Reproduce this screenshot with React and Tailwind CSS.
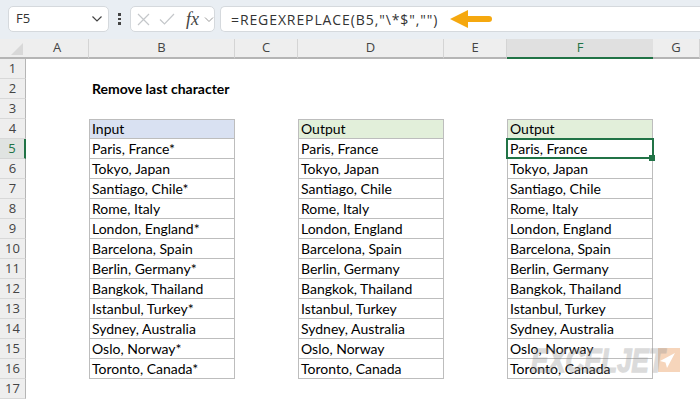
const columns = ["A", "B", "C", "D", "E", "F", "G"];

const inputs = [
  "Paris, France*",
  "Tokyo, Japan",
  "Santiago, Chile*",
  "Rome, Italy",
  "London, England*",
  "Barcelona, Spain",
  "Berlin, Germany*",
  "Bangkok, Thailand",
  "Istanbul, Turkey*",
  "Sydney, Australia",
  "Oslo, Norway*",
  "Toronto, Canada*",
];

const outputs = inputs.map((s) => s.replace("*", ""));

const cellFont = "font-['Lato','Liberation_Sans',sans-serif] text-[14px] text-black";

function Toolbar() {
  return (
    <div className="flex h-[39px] items-start bg-[#e9eef3] pt-[6px] pl-[8px]">
      <div className="flex h-[26px] w-[101px] items-center justify-between rounded-[5px] border border-[#d5d9dd] bg-white pl-[7px] pr-[5px]">
        <span className="font-['Open_Sans',sans-serif] text-[13px] text-[#333]">F5</span>
        <svg width="12" height="8" viewBox="0 0 12 8" fill="none" stroke="#444" strokeWidth="1.2">
          <path d="M1.5 1.5 6 6l4.5-4.5" />
        </svg>
      </div>
      <div className="flex h-[26px] w-[21px] flex-col items-center justify-center gap-[2px]">
        <span className="size-[2.5px] bg-[#444]" />
        <span className="size-[2.5px] bg-[#444]" />
        <span className="size-[2.5px] bg-[#444]" />
      </div>
      <div className="flex h-[26px] w-[85px] items-center rounded-[5px] border border-[#d5d9dd] bg-white pl-[6px]">
        <svg width="13" height="13" viewBox="0 0 13 13" stroke="#c4c7ca" strokeWidth="1.2" fill="none">
          <path d="M1 1l11 11M12 1 1 12" />
        </svg>
        <svg className="ml-[9px]" width="16" height="12" viewBox="0 0 16 12" stroke="#c4c7ca" strokeWidth="1.2" fill="none">
          <path d="M1 6.5 5.5 11 15 1" />
        </svg>
        <span className="ml-[11px] font-['Liberation_Serif',serif] text-[18px] italic leading-none text-[#444]">fx</span>
        <svg className="ml-[5px]" width="10" height="7" viewBox="0 0 10 7" fill="none" stroke="#999" strokeWidth="1">
          <path d="M1 1.5 5 5.5l4-4" />
        </svg>
      </div>
      <div className="ml-[5px] flex h-[26px] flex-1 items-center rounded-l-[5px] border border-r-0 border-[#d5d9dd] bg-white pl-[10px]">
        <span className="w-[219px] whitespace-nowrap font-['Open_Sans',sans-serif] text-[14px] tracking-[0.9px] text-[#333]">
          =REGEXREPLACE(B5,"\*$","")
        </span>
        <svg width="42" height="18" viewBox="0 0 42 18" fill="#f5a80f">
          <path d="M0 9 18 0v6h21a3 3 0 0 1 0 6H18v6z" />
        </svg>
      </div>
    </div>
  );
}

function ColumnHeaders() {
  return (
    <>
      <div className="relative h-[20px] border-b-2 border-[#b5b5b5] bg-[#eeeeee]">
        <svg className="absolute bottom-[2px] right-[3px]" width="12" height="12" viewBox="0 0 12 12" fill="#d8d8d8">
          <path d="M12 0v12H0z" />
        </svg>
      </div>
      {columns.map((c) => (
        <div
          key={c}
          className={
            c === "F"
              ? "flex h-[20px] items-center justify-center border-b-2 border-[#217346] bg-[#e0e0e0] font-['Open_Sans',sans-serif] text-[13px] text-[#217346]"
              : "flex h-[20px] items-center justify-center border-b-2 border-r border-[#b5b5b5] border-r-[#d4d4d4] bg-[#eeeeee] font-['Open_Sans',sans-serif] text-[13px] text-[#444]"
          }
        >
          {c}
        </div>
      ))}
    </>
  );
}

function RowHeader({ n }) {
  if (n === 5) {
    return (
      <div className="flex h-[20px] items-center justify-center border-b border-r-2 border-[#d4d4d4] border-r-[#217346] bg-[#e0e3e1] font-['Open_Sans',sans-serif] text-[13px] text-[#217346]">
        {n}
      </div>
    );
  }
  return (
    <div className="flex h-[20px] items-center justify-center border-b border-r border-[#d8d8d8] border-r-[#b5b5b5] bg-[#eeeeee] font-['Open_Sans',sans-serif] text-[13px] text-[#444]">
      {n}
    </div>
  );
}

function TableCell({ text, head, first, selected }) {
  return (
    <div
      className={`relative flex h-[20px] items-center whitespace-nowrap border-x border-b border-[#bdbdbd] pl-[2px] ${cellFont} ${
        first ? "border-t pb-[2px]" : ""
      } ${head || "bg-white"} ${selected ? "z-10" : ""}`}
    >
      {text}
      {selected && (
        <>
          <span className="absolute -left-[2px] -top-[1px] h-[21px] w-[148px] border-2 border-[#217346]" />
          <span className="absolute -bottom-[3px] -right-[3px] size-[6px] bg-[#217346]" />
        </>
      )}
    </div>
  );
}

function Watermark() {
  return (
    <div className="absolute left-[531px] top-[348px] z-20 flex items-start">
      <span className="w-[127px] origin-left scale-x-[0.76] whitespace-nowrap font-['Liberation_Sans',sans-serif] text-[34px] font-bold italic leading-[24px] text-[#8a8a8a] opacity-30 [-webkit-text-stroke:1.5px_#8a8a8a]">
        EXCELJET
      </span>
      <svg width="22" height="24" viewBox="0 0 22 24" className="bg-[#f6d5bb]" fill="#fff">
        <path d="M17 5 2 13l5.5 1.5L9 20z" />
      </svg>
    </div>
  );
}

export default function App() {
  const rows = Array.from({ length: 17 }, (_, i) => i + 1);
  return (
    <div className="relative h-[400px] w-[700px] overflow-hidden bg-white">
      <Toolbar />
      <div className="grid grid-cols-[26px_63px_146px_63px_146px_63px_146px_47px] auto-rows-[20px]">
        <ColumnHeaders />
        {rows.map((n) => {
          const i = n - 5;
          const data = i >= 0 && i < 12;
          return (
            <div key={n} className="contents">
              <RowHeader n={n} />
              <div />
              {n === 2 && (
                <div className="flex items-center whitespace-nowrap pb-[1px] pl-[3px] font-['Lato','Liberation_Sans',sans-serif] text-[14px] font-bold text-black">
                  Remove last character
                </div>
              )}
              {n === 4 && <TableCell text="Input" head="bg-[#d9e1f2]" first />}
              {data && <TableCell text={inputs[i]} />}
              {n !== 2 && n !== 4 && !data && <div />}
              <div />
              {n === 4 && <TableCell text="Output" head="bg-[#e2efda]" first />}
              {data && <TableCell text={outputs[i]} />}
              {n !== 4 && !data && <div />}
              <div />
              {n === 4 && <TableCell text="Output" head="bg-[#e2efda]" first />}
              {data && <TableCell text={outputs[i]} selected={n === 5} />}
              {n !== 4 && !data && <div />}
              <div />
            </div>
          );
        })}
      </div>
      <Watermark />
    </div>
  );
}
